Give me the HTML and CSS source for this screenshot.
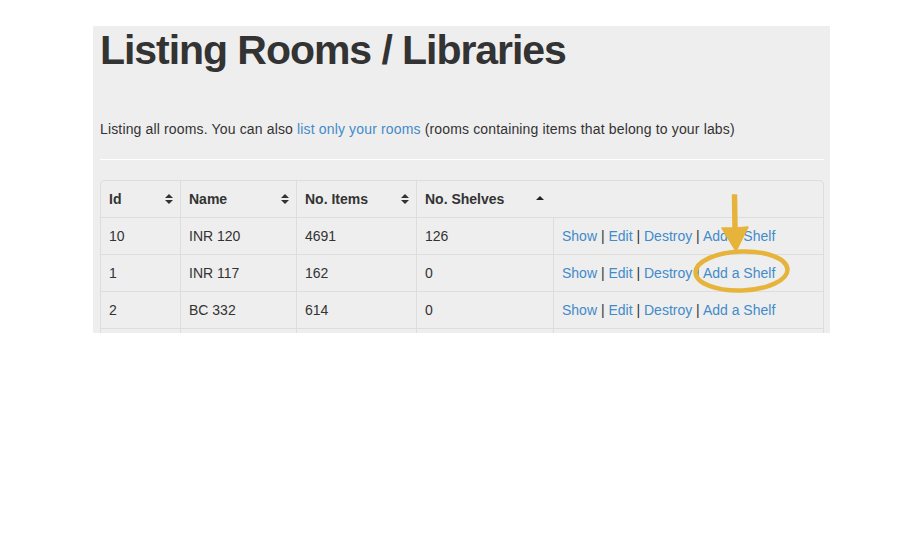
FILE: index.html
```html
<!DOCTYPE html>
<html>
<head>
<meta charset="utf-8">
<link rel="stylesheet" href="styles.css">
</head>
<body>
<div class="panel">
  <h1 class="title">Listing Rooms / Libraries</h1>
  <p class="lead">Listing all rooms. You can also <a href="#">list only your rooms</a> (rooms containing items that belong to your labs)</p>
  <hr class="rule">
  <table class="rooms">
    <colgroup>
      <col class="c-id"><col class="c-name"><col class="c-items"><col class="c-shelves"><col class="c-actions">
    </colgroup>
    <thead>
      <tr>
        <th><span class="th-in">Id<svg class="sort" width="8" height="10" viewBox="0 0 8 10"><path d="M0 4 L4 0 L8 4 Z M0 6 L8 6 L4 10 Z" fill="#333"/></svg></span></th>
        <th><span class="th-in">Name<svg class="sort" width="8" height="10" viewBox="0 0 8 10"><path d="M0 4 L4 0 L8 4 Z M0 6 L8 6 L4 10 Z" fill="#333"/></svg></span></th>
        <th><span class="th-in">No. Items<svg class="sort" width="8" height="10" viewBox="0 0 8 10"><path d="M0 4 L4 0 L8 4 Z M0 6 L8 6 L4 10 Z" fill="#333"/></svg></span></th>
        <th class="th-noright"><span class="th-in">No. Shelves<svg class="sort up" width="8" height="10" viewBox="0 0 8 10"><path d="M0 6 L4 2 L8 6 Z" fill="#222"/></svg></span></th>
        <th class="th-last"></th>
      </tr>
    </thead>
    <tbody>
      <tr><td>10</td><td>INR 120</td><td>4691</td><td>126</td><td class="acts"><a href="#">Show</a> | <a href="#">Edit</a> | <a href="#">Destroy</a> | <a href="#">Add a Shelf</a></td></tr>
      <tr><td>1</td><td>INR 117</td><td>162</td><td>0</td><td class="acts"><a href="#">Show</a> | <a href="#">Edit</a> | <a href="#">Destroy</a> | <a href="#">Add a Shelf</a></td></tr>
      <tr><td>2</td><td>BC 332</td><td>614</td><td>0</td><td class="acts"><a href="#">Show</a> | <a href="#">Edit</a> | <a href="#">Destroy</a> | <a href="#">Add a Shelf</a></td></tr>
      <tr><td></td><td></td><td></td><td></td><td></td></tr>
    </tbody>
  </table>
  <svg class="callout" width="120" height="110" viewBox="0 0 120 110">
    <g fill="none" stroke="#e6b43b" stroke-width="4.5">
      <ellipse cx="56.5" cy="86" rx="46" ry="19.5" transform="rotate(-2 56.5 86)"/>
    </g>
    <path d="M47.5 10 L51.5 10 L52 43 L63 42 L51 66 L37 43 L48 43 Z" fill="#e6b43b" stroke="#e6b43b" stroke-width="1.5" stroke-linejoin="round"/>
  </svg>
</div>
</body>
</html>
```

FILE: styles.css
```css
html, body {
  margin: 0;
  padding: 0;
  background: #fff;
}
body {
  font-family: "Liberation Sans", Arial, sans-serif;
  color: #333;
  font-size: 14px;
}
.panel {
  position: relative;
  margin: 26px 0 0 93px;
  width: 723px;
  height: 307px;
  padding: 0 7px;
  background: #eeeeee;
  overflow: hidden;
}
.title {
  margin: 0;
  padding-top: 2px;
  font-size: 41px;
  line-height: 45px;
  font-weight: bold;
  color: #333;
  letter-spacing: -1.05px;
}
.lead {
  margin: 46px 0 0 0;
  line-height: 20px;
  font-size: 14px;
  letter-spacing: 0.15px;
}
a {
  color: #428bca;
  text-decoration: none;
}
.rule {
  margin: 20px 0 0 0;
  border: 0;
  border-top: 1px solid #fff;
  width: 724px;
  height: 0;
}
.rooms {
  margin-top: 20px;
  width: 724px;
  border-collapse: separate;
  border-spacing: 0;
  border: 1px solid #dddddd;
  border-radius: 4px;
  table-layout: fixed;
}
.c-id { width: 79px; }
.c-name { width: 116px; }
.c-items { width: 120px; }
.c-shelves { width: 137px; }
.c-actions { width: auto; }
.rooms th, .rooms td {
  height: 36px;
  padding: 0 8px;
  text-align: left;
  vertical-align: middle;
  border-left: 1px solid #dddddd;
  border-top: 1px solid #dddddd;
  line-height: 20px;
  white-space: nowrap;
}
.rooms th:first-child, .rooms td:first-child {
  border-left: 0;
}
.rooms thead th {
  border-top: 0;
  font-weight: bold;
  height: 36px;
}
.rooms th.th-last {
  border-left: 0;
}
.th-in {
  display: flex;
  align-items: center;
  justify-content: space-between;
}
.sort {
  display: block;
  margin-right: -1px;
}
.sort.up {
  margin-right: 1px;
}
.callout {
  position: absolute;
  left: 592px;
  top: 159px;
}
```
